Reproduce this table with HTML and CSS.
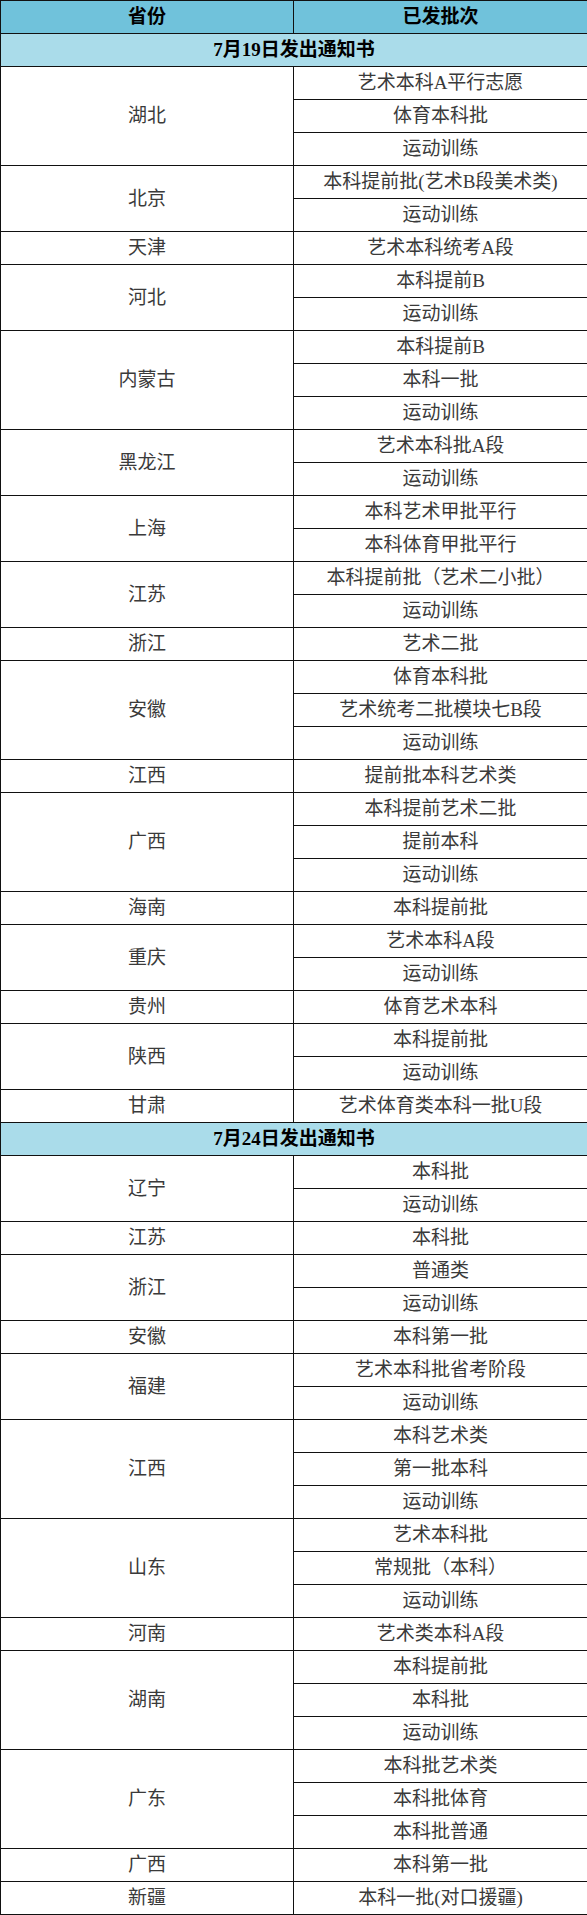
FILE: index.html
```html
<!DOCTYPE html>
<html lang="zh-CN">
<head>
<meta charset="utf-8">
<title>已发批次</title>
<link rel="stylesheet" href="styles.css">
</head>
<body>
<table class="tbl">
<colgroup><col class="c1"><col class="c2"></colgroup>
<thead>
<tr class="head"><th>省份</th><th>已发批次</th></tr>
</thead>
<tbody>
<tr class="sec"><td colspan="2">7月19日发出通知书</td></tr>
<tr><td rowspan="3">湖北</td><td>艺术本科A平行志愿</td></tr>
<tr><td>体育本科批</td></tr>
<tr><td>运动训练</td></tr>
<tr><td rowspan="2">北京</td><td>本科提前批(艺术B段美术类)</td></tr>
<tr><td>运动训练</td></tr>
<tr><td>天津</td><td>艺术本科统考A段</td></tr>
<tr><td rowspan="2">河北</td><td>本科提前B</td></tr>
<tr><td>运动训练</td></tr>
<tr><td rowspan="3">内蒙古</td><td>本科提前B</td></tr>
<tr><td>本科一批</td></tr>
<tr><td>运动训练</td></tr>
<tr><td rowspan="2">黑龙江</td><td>艺术本科批A段</td></tr>
<tr><td>运动训练</td></tr>
<tr><td rowspan="2">上海</td><td>本科艺术甲批平行</td></tr>
<tr><td>本科体育甲批平行</td></tr>
<tr><td rowspan="2">江苏</td><td>本科提前批（艺术二小批）</td></tr>
<tr><td>运动训练</td></tr>
<tr><td>浙江</td><td>艺术二批</td></tr>
<tr><td rowspan="3">安徽</td><td>体育本科批</td></tr>
<tr><td>艺术统考二批模块七B段</td></tr>
<tr><td>运动训练</td></tr>
<tr><td>江西</td><td>提前批本科艺术类</td></tr>
<tr><td rowspan="3">广西</td><td>本科提前艺术二批</td></tr>
<tr><td>提前本科</td></tr>
<tr><td>运动训练</td></tr>
<tr><td>海南</td><td>本科提前批</td></tr>
<tr><td rowspan="2">重庆</td><td>艺术本科A段</td></tr>
<tr><td>运动训练</td></tr>
<tr><td>贵州</td><td>体育艺术本科</td></tr>
<tr><td rowspan="2">陕西</td><td>本科提前批</td></tr>
<tr><td>运动训练</td></tr>
<tr><td>甘肃</td><td>艺术体育类本科一批U段</td></tr>
<tr class="sec"><td colspan="2">7月24日发出通知书</td></tr>
<tr><td rowspan="2">辽宁</td><td>本科批</td></tr>
<tr><td>运动训练</td></tr>
<tr><td>江苏</td><td>本科批</td></tr>
<tr><td rowspan="2">浙江</td><td>普通类</td></tr>
<tr><td>运动训练</td></tr>
<tr><td>安徽</td><td>本科第一批</td></tr>
<tr><td rowspan="2">福建</td><td>艺术本科批省考阶段</td></tr>
<tr><td>运动训练</td></tr>
<tr><td rowspan="3">江西</td><td>本科艺术类</td></tr>
<tr><td>第一批本科</td></tr>
<tr><td>运动训练</td></tr>
<tr><td rowspan="3">山东</td><td>艺术本科批</td></tr>
<tr><td>常规批（本科）</td></tr>
<tr><td>运动训练</td></tr>
<tr><td>河南</td><td>艺术类本科A段</td></tr>
<tr><td rowspan="3">湖南</td><td>本科提前批</td></tr>
<tr><td>本科批</td></tr>
<tr><td>运动训练</td></tr>
<tr><td rowspan="3">广东</td><td>本科批艺术类</td></tr>
<tr><td>本科批体育</td></tr>
<tr><td>本科批普通</td></tr>
<tr><td>广西</td><td>本科第一批</td></tr>
<tr><td>新疆</td><td>本科一批(对口援疆)</td></tr>
</tbody>
</table>
</body>
</html>
```

FILE: styles.css
```css
html, body {
  margin: 0;
  padding: 0;
  background: #ffffff;
}

.tbl {
  border-collapse: collapse;
  table-layout: fixed;
  width: 587px;
  font-family: "Liberation Serif", "Noto Sans CJK SC", serif;
  font-size: 19px;
  color: #3a3a3a;
}

.c1 { width: 293px; }
.c2 { width: 294px; }

.tbl th,
.tbl td {
  border: 1px solid #111111;
  height: 32px;
  padding: 0;
  text-align: center;
  vertical-align: middle;
  line-height: 20px;
  white-space: nowrap;
}

.head th {
  background: #70c2db;
  color: #000000;
  font-weight: bold;
}

.sec td {
  background: #aadcea;
  color: #000000;
  font-weight: bold;
}
```
